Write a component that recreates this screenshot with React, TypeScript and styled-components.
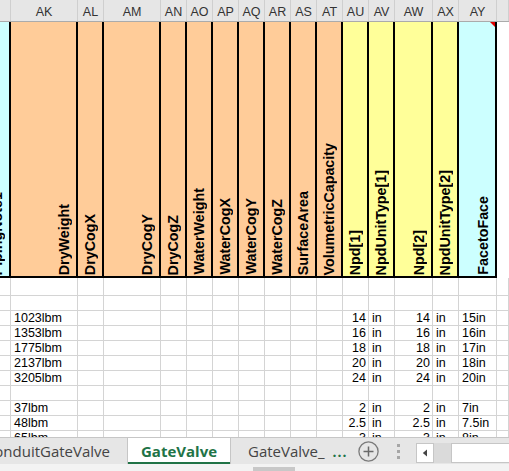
import styled, { createGlobalStyle } from "styled-components";

const GlobalStyle = createGlobalStyle`
  html, body { margin: 0; padding: 0; }
  body {
    font-family: "Liberation Sans", Arial, sans-serif;
    background: #ffffff;
  }
`;

// column widths: (PipingNote1) AK AL AM AN..AV AW AX AY (AZ)
const COLS = "11px 67px 26px 57px repeat(9, 26px) 38px 26px 38px 12px";

type Fill = "orange" | "yellow" | "cyan" | "none";
const fills: Record<Fill, string> = {
  orange: "#ffcc99",
  yellow: "#ffff99",
  cyan: "#ccffff",
  none: "#ffffff",
};

const letters = ["", "AK", "AL", "AM", "AN", "AO", "AP", "AQ", "AR", "AS", "AT", "AU", "AV", "AW", "AX", "AY", ""];

const headers: { label: string; fill: Fill; note?: boolean }[] = [
  { label: "PipingNote1", fill: "cyan" },
  { label: "DryWeight", fill: "orange" },
  { label: "DryCogX", fill: "orange" },
  { label: "DryCogY", fill: "orange" },
  { label: "DryCogZ", fill: "orange" },
  { label: "WaterWeight", fill: "orange" },
  { label: "WaterCogX", fill: "orange" },
  { label: "WaterCogY", fill: "orange" },
  { label: "WaterCogZ", fill: "orange" },
  { label: "SurfaceArea", fill: "orange" },
  { label: "VolumetricCapacity", fill: "orange" },
  { label: "Npd[1]", fill: "yellow" },
  { label: "NpdUnitType[1]", fill: "yellow" },
  { label: "Npd[2]", fill: "yellow" },
  { label: "NpdUnitType[2]", fill: "yellow" },
  { label: "FacetoFace", fill: "cyan", note: true },
  { label: "", fill: "none" },
];

interface IRow {
  h: number;
  weight?: string;
  npd?: string;
  face?: string;
}

const rows: IRow[] = [
  { h: 18 },
  { h: 15 },
  { h: 15, weight: "1023lbm", npd: "14", face: "15in" },
  { h: 15, weight: "1353lbm", npd: "16", face: "16in" },
  { h: 15, weight: "1775lbm", npd: "18", face: "17in" },
  { h: 15, weight: "2137lbm", npd: "20", face: "18in" },
  { h: 15, weight: "3205lbm", npd: "24", face: "20in" },
  { h: 15 },
  { h: 15, weight: "37lbm", npd: "2", face: "7in" },
  { h: 15, weight: "48lbm", npd: "2.5", face: "7.5in" },
  { h: 15, weight: "65lbm", npd: "3", face: "8in" },
  { h: 15 },
];

type Align = "left" | "right";

const cellsFor = (r: IRow): { text?: string; align: Align }[] => {
  const out: { text?: string; align: Align }[] = letters.map(() => ({ align: "left" as Align }));
  out[1] = { text: r.weight, align: "left" };
  out[11] = { text: r.npd, align: "right" };
  out[12] = { text: r.npd ? "in" : undefined, align: "left" };
  out[13] = { text: r.npd, align: "right" };
  out[14] = { text: r.npd ? "in" : undefined, align: "left" };
  out[15] = { text: r.face, align: "left" };
  return out;
};

const App = () => {
  return (
    <Sheet>
      <GlobalStyle />
      <GridArea>
        <LetterRow>
          {letters.map((l, i) => (
            <LetterCell key={i}>{l}</LetterCell>
          ))}
        </LetterRow>
        <HeaderBand>
          {headers.map((h, i) => (
            <HeadCell key={i} $fill={h.fill} $blank={h.fill === "none"}>
              {h.note && <NoteMark />}
              <VLabel>{h.label}</VLabel>
            </HeadCell>
          ))}
        </HeaderBand>
        {rows.map((r, ri) => (
          <DataRow key={ri} $h={r.h}>
            {cellsFor(r).map((c, ci) => (
              <DataCell key={ci} $align={c.align}>
                {c.text}
              </DataCell>
            ))}
          </DataRow>
        ))}
      </GridArea>

      <TabBar>
        <TabStrip>
          <Tab $clip>ConduitGateValve</Tab>
          <Tab $active>GateValve</Tab>
          <Tab $plain>GateValve_</Tab>
          <MoreTabs>...</MoreTabs>
          <AddSheet>
            <svg width="21" height="21" viewBox="0 0 21 21">
              <circle cx="10.5" cy="10.5" r="9.6" fill="none" stroke="#7a7a7a" strokeWidth="1.3" />
              <path d="M10.5 5.5v10M5.5 10.5h10" stroke="#6a6a6a" strokeWidth="1.5" />
            </svg>
          </AddSheet>
          <Grip>
            <i />
            <i />
            <i />
          </Grip>
          <ScrollLeft>
            <svg width="6" height="8" viewBox="0 0 6 8">
              <path d="M5 0.5v7L0.8 4z" fill="#444" />
            </svg>
          </ScrollLeft>
          <ScrollTrack />
          <ScrollBox />
        </TabStrip>
        <BottomStrip>
          <Thumb />
        </BottomStrip>
      </TabBar>
    </Sheet>
  );
};

const Sheet = styled.div`
  width: 509px;
  height: 471px;
  display: flex;
  flex-direction: column;
  overflow: hidden;
`;

const GridArea = styled.div`
  flex: 1;
  overflow: hidden;
`;

const LetterRow = styled.div`
  display: grid;
  grid-template-columns: ${COLS};
  height: 22px;
  background: #e6e6e6;
  border-bottom: 1px solid #ababab;
  box-sizing: border-box;
`;

const LetterCell = styled.div`
  border-right: 1px solid #cfcfcf;
  display: flex;
  align-items: flex-end;
  justify-content: center;
  padding-bottom: 3px;
  font-size: 12.5px;
  line-height: 1;
  color: #333;
`;

const HeaderBand = styled.div`
  display: grid;
  grid-template-columns: ${COLS};
  height: 256px;
`;

const HeadCell = styled.div<{ $fill: Fill; $blank?: boolean }>`
  position: relative;
  background: ${(p) => fills[p.$fill]};
  border-right: ${(p) => (p.$blank ? "none" : "2px solid #000")};
  border-bottom: ${(p) => (p.$blank ? "none" : "2px solid #000")};
  display: flex;
  justify-content: flex-end;
  align-items: flex-end;
  overflow: hidden;
  padding: 0 4px 1px 0;
`;

const VLabel = styled.span`
  writing-mode: vertical-rl;
  transform: rotate(180deg);
  font-weight: bold;
  font-size: 14.3px;
  line-height: 16px;
  white-space: nowrap;
  color: #000;
`;

const NoteMark = styled.span`
  position: absolute;
  top: 0;
  right: 0;
  width: 0;
  height: 0;
  border-top: 5px solid #e00000;
  border-left: 5px solid transparent;
`;

const DataRow = styled.div<{ $h: number }>`
  display: grid;
  grid-template-columns: ${COLS};
  height: ${(p) => p.$h}px;
`;

const DataCell = styled.div<{ $align: Align }>`
  border-right: 1px solid #d4d4d4;
  border-bottom: 1px solid #d4d4d4;
  display: flex;
  align-items: center;
  justify-content: ${(p) => (p.$align === "right" ? "flex-end" : "flex-start")};
  padding: 0 2px 0 3px;
  font-size: 12.5px;
  line-height: 1;
  color: #000;
  white-space: nowrap;
  overflow: visible;
`;

const TabBar = styled.div`
  height: 34px;
  flex: none;
  display: flex;
  flex-direction: column;
  background: #e6e6e6;
`;

const TabStrip = styled.div`
  height: 27px;
  display: flex;
  align-items: stretch;
  border-top: 1px solid #c6c6c6;
  box-sizing: border-box;
`;

const Tab = styled.div<{ $active?: boolean; $clip?: boolean; $plain?: boolean }>`
  flex: none;
  display: flex;
  align-items: center;
  justify-content: ${(p) => (p.$clip ? "flex-end" : "center")};
  width: ${(p) => (p.$clip ? "128px" : p.$active ? "103px" : "auto")};
  box-sizing: border-box;
  overflow: hidden;
  white-space: nowrap;
  padding: ${(p) => (p.$clip ? "0 17px 0 0" : p.$plain ? "0 4px 0 17px" : "0")};
  font-family: "Open Sans", "Noto Sans", sans-serif;
  font-size: 15px;
  font-weight: ${(p) => (p.$active ? 700 : 400)};
  color: ${(p) => (p.$active ? "#217346" : "#444")};
  background: ${(p) => (p.$active ? "#ffffff" : "transparent")};
  border-right: ${(p) => (p.$plain ? "none" : "1px solid #c6c6c6")};
  box-shadow: ${(p) => (p.$active ? "inset 0 -2px 0 #217346" : "none")};
`;

const MoreTabs = styled.div`
  display: flex;
  align-items: center;
  padding: 0 3px 0 4px;
  font-family: "Open Sans", "Noto Sans", sans-serif;
  font-size: 14px;
  font-weight: 700;
  color: #217346;
  letter-spacing: 1px;
`;

const AddSheet = styled.div`
  display: flex;
  align-items: center;
  margin-left: 7px;
`;

const Grip = styled.div`
  display: flex;
  flex-direction: column;
  justify-content: center;
  gap: 3px;
  margin-left: 18px;
  i {
    display: block;
    width: 3px;
    height: 3px;
    background: #a6a6a6;
  }
`;

const ScrollLeft = styled.div`
  margin: 5px 0 1px 16px;
  width: 18px;
  background: #ffffff;
  border: 1px solid #c6c6c6;
  box-sizing: border-box;
  display: flex;
  align-items: center;
  justify-content: center;
`;

const ScrollTrack = styled.div`
  margin: 5px 0 1px;
  width: 17px;
  background: #dadada;
`;

const ScrollBox = styled.div`
  flex: 1;
  margin: 5px 0 1px;
  background: #ffffff;
  border: 1px solid #c6c6c6;
  border-right: none;
`;

const BottomStrip = styled.div`
  flex: 1;
  background: #f3f3f3;
  display: flex;
  align-items: flex-end;
`;

const Thumb = styled.div`
  margin-left: 253px;
  width: 42px;
  height: 4px;
  background: #c8c8c8;
`;

export default App;
